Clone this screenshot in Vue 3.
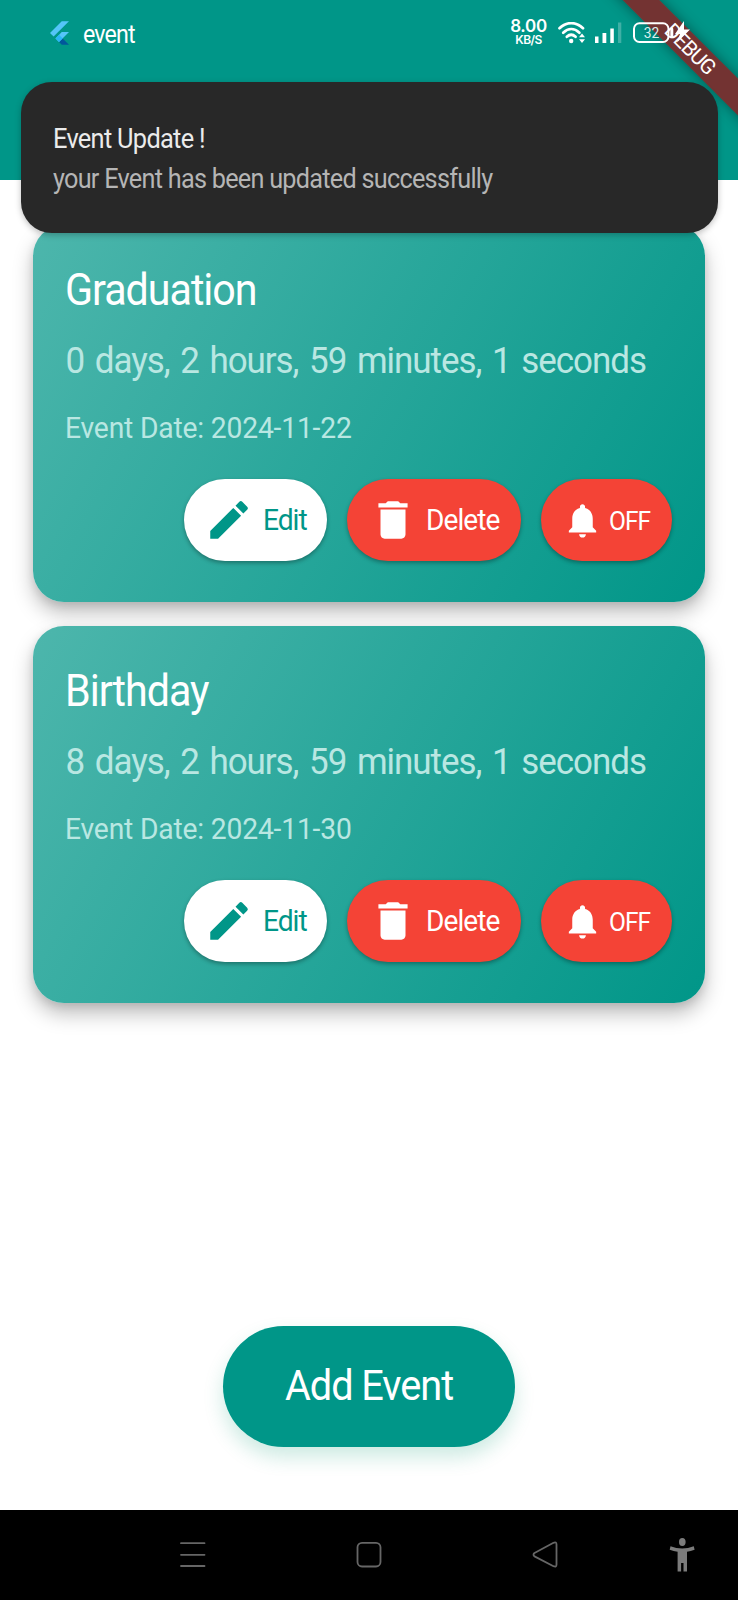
<script setup>
const events = [
  { name: 'Graduation', left: '0 days, 2 hours, 59 minutes, 1 seconds', date: '2024-11-22' },
  { name: 'Birthday', left: '8 days, 2 hours, 59 minutes, 1 seconds', date: '2024-11-30' },
]
</script>

<template>
  <div class="screen">
    <header class="header">
      <div class="status">
        <svg class="logo" viewBox="2.3 0 19.4 24">
          <path fill="#54c5f8" d="M14.314 0L2.3 12 6 15.7 21.684.013z" />
          <path fill="#54c5f8" d="M14.328 11.072L7.857 17.53l3.69 3.69L21.7 11.072z" />
          <path fill="#01579b" d="M11.547 21.22L14.327 24H21.7l-6.46-6.468z" />
          <path fill="#29b6f6" d="M7.857 17.53l3.69-3.69 3.693 3.692-3.693 3.688z" />
        </svg>
        <span class="app-name">event</span>
        <div class="speed"><b>8.00</b><small>KB/S</small></div>
        <svg class="wifi" viewBox="0 0 28 22">
          <g fill="none" stroke="#fff" stroke-width="2.7" stroke-linecap="round">
            <path d="M1.5 6.3C8.5-.6 18-.6 25 6.3" />
            <path d="M5.2 10.7c5-4.8 11.2-4.8 16.2 0" />
            <path d="M8.8 14.8c2.8-2.6 6-2.6 8.8 0" />
          </g>
          <circle cx="13.2" cy="19" r="2.2" fill="#fff" />
          <path fill="#fff" d="M21 15.3l3-3.8 3 3.8zM21 17.3h6l-3 3.8z" />
        </svg>
        <svg class="signal" viewBox="0 0 28 22">
          <g fill="#fff">
            <rect x="0" y="14.5" width="3.5" height="6.5" />
            <rect x="7.5" y="11" width="3.8" height="10" />
            <rect x="15.3" y="6.5" width="3.5" height="14.5" />
            <rect x="23" y="0.5" width="3.3" height="20.5" opacity=".25" />
          </g>
        </svg>
        <svg class="battery" viewBox="0 0 58 24">
          <rect x="1" y="2.3" width="34.5" height="18.7" rx="5.5" fill="none" stroke="#fff" stroke-width="2" />
          <text x="10.8" y="17" textLength="15.5" lengthAdjust="spacingAndGlyphs">32</text>
          <path d="M38.8 8v7.5" stroke="#fff" stroke-width="3" stroke-linecap="round" />
          <path fill="#fff" d="M51 0l-9 13h5l-3 8.500 13-13h-6z" />
        </svg>
      </div>
    </header>

    <main class="list">
      <article v-for="e in events" :key="e.name" class="card">
        <h2 class="title"><span>{{ e.name }}</span></h2>
        <p class="countdown"><span>{{ e.left }}</span></p>
        <p class="date"><span>Event Date: {{ e.date }}</span></p>
        <div class="actions">
          <button class="btn edit">
            <svg viewBox="0 0 24 24"><path d="M3 17.25V21h3.75L17.81 9.94l-3.75-3.75zM20.71 7.04a.996.996 0 0 0 0-1.41l-2.34-2.34a.996.996 0 0 0-1.41 0l-1.83 1.83 3.75 3.75z" /></svg>
            <span>Edit</span>
          </button>
          <button class="btn delete">
            <svg viewBox="0 0 24 24"><path d="M6 19c0 1.1.9 2 2 2h8c1.1 0 2-.9 2-2V7H6zM19 4h-3.5l-1-1h-5l-1 1H5v2h14z" /></svg>
            <span>Delete</span>
          </button>
          <button class="btn off">
            <svg viewBox="0 0 24 24"><path d="M12 22c1.1 0 2-.9 2-2h-4c0 1.1.89 2 2 2zM18 16v-5c0-3.07-1.64-5.64-4.5-6.32V4c0-.83-.67-1.5-1.5-1.5s-1.5.67-1.5 1.5v.68C7.63 5.36 6 7.92 6 11v5l-2 2v1h16v-1z" /></svg>
            <span>OFF</span>
          </button>
        </div>
      </article>
    </main>

    <button class="add"><span>Add Event</span></button>

    <nav class="nav">
      <svg viewBox="0 0 738 90">
        <g fill="none" stroke="#666" stroke-width="1.8" stroke-linecap="round" stroke-linejoin="round">
          <path d="M181 33.2h23.500M181 44.800h23.500M181 56h23.500" />
          <rect x="357.5" y="32.8" width="23" height="23.7" rx="4.5" />
          <path d="M534.5 43L553.5 32.8q3-1.3 3 1.7V54.5q0 3-3 1.7L534.5 46.4q-2-1.8 0-3.4z" />
        </g>
        <g fill="#7b7b7b">
          <ellipse cx="682.3" cy="32" rx="3.3" ry="3.9" />
          <path d="M670.5 36.2q11.700 4.400 23.300 0l.8 3.500q-4 1.600-7.600 2V61.500h-3.500V53h-2.400v8.500h-3.500V41.700q-4-.5-7.900-2z" />
        </g>
      </svg>
    </nav>

    <div class="debug-clip"><div class="debug"><span>DEBUG</span></div></div>

    <section class="toast">
      <p class="toast-title"><span>Event Update !</span></p>
      <p class="toast-body"><span>your Event has been updated successfully</span></p>
    </section>
  </div>
</template>

<style>
body { margin: 0; background: #fff; }
</style>

<style scoped>
.screen {
  position: relative;
  display: flex;
  flex-direction: column;
  width: 738px;
  height: 1600px;
  overflow: hidden;
  background: #fff;
  font-family: Roboto, "Liberation Sans", sans-serif;
}
p, h2 { margin: 0; font-weight: 400; white-space: nowrap; }
p span, h2 span, .btn span, .add span, .app-name { display: inline-block; transform-origin: 0 50%; white-space: nowrap; }
svg { display: block; flex: none; }

.header { flex: none; height: 180px; background: #009688; }
.status { position: relative; z-index: 2; display: flex; align-items: center; height: 66px; padding-left: 50px; color: #fff; }
.logo { width: 19px; height: 24px; }
.app-name { width: 51px; margin-left: 14px; margin-top: 2px; font-size: 25px; letter-spacing: -0.9px; transform: scaleX(.93); }
.speed { display: flex; flex-direction: column; align-items: center; width: 37px; margin-left: 376px; margin-top: -2px; }
.speed b { font: 600 17px/15px Inter, sans-serif; letter-spacing: -.3px; }
.speed small { font: 600 12px/12px Inter, sans-serif; letter-spacing: -.6px; }
.wifi { width: 28px; height: 22px; margin-left: 11px; }
.signal { width: 28px; height: 22px; margin-left: 9px; }
.battery { width: 58px; height: 24px; margin-left: 10px; }
.battery text { font: 400 15px Roboto, sans-serif; fill: #d9f0ee; }

.list { display: flex; flex-direction: column; flex: none; gap: 24px; padding: 45px 33px 0; }
.card {
  box-sizing: border-box;
  height: 377px;
  padding: 39px 33px 0 32px;
  border-radius: 31px;
  background: linear-gradient(119.3deg, #4db6ac, #009688);
  box-shadow: 0 11px 20px rgba(0, 0, 0, .25), 0 3px 8px rgba(0, 0, 0, .1);
}
.title { height: 52px; font-size: 44px; line-height: 52px; color: #fff; }
.title span { letter-spacing: -1.1px; transform: scaleX(.937); }
.countdown { height: 44px; margin-top: 22px; font-size: 37px; line-height: 44px; color: #b9e7e2; }
.countdown span { letter-spacing: -1.1px; word-spacing: 3.2px; transform: translate(.5px, .5px) scaleX(.945); }
.date { height: 34px; margin-top: 29px; font-size: 29px; line-height: 34px; color: #b9e7e2; }
.date span { letter-spacing: -.2px; transform: scaleX(.975); }
.actions { display: flex; justify-content: flex-end; gap: 20px; margin-top: 34px; }
.btn {
  display: flex;
  align-items: center;
  box-sizing: border-box;
  height: 82px;
  padding: 0;
  border: 0;
  border-radius: 41px;
  color: #fff;
  background: #f44336;
  font: 400 30px Roboto, sans-serif;
  box-shadow: 0 2px 4px rgba(0, 0, 0, .32);
}
.btn svg { width: 50px; height: 50px; fill: currentColor; }
.edit { width: 143px; padding-left: 20px; color: #009688; background: #fff; }
.edit span { margin-left: 9px; margin-top: -1px; letter-spacing: -1.1px; transform: scaleX(.94); }
.delete { width: 174px; padding-left: 20.5px; }
.delete span { margin-left: 8.5px; margin-top: -1px; letter-spacing: -1px; transform: scaleX(.935); }
.off { width: 131px; padding-left: 21px; font-size: 25px; }
.off svg { width: 41px; height: 41px; }
.off span { margin-left: 6px; margin-top: 2px; letter-spacing: -1px; transform: scaleX(.98); }

.add {
  flex: none;
  align-self: center;
  box-sizing: border-box;
  width: 292px;
  height: 121px;
  margin-top: 322.5px;
  padding: 0 0 2px 62px;
  border: 0;
  border-radius: 61px;
  text-align: left;
  color: #fff;
  background: #009688;
  font: 400 42px Roboto, sans-serif;
  box-shadow: 0 10px 20px rgba(0, 150, 110, .2);
}
.add span { letter-spacing: -1.1px; transform: scaleX(.945); }

.nav { height: 90px; margin-top: auto; background: #000; }
.nav svg { width: 738px; height: 90px; }

.debug-clip { position: absolute; top: 0; right: 0; width: 160px; height: 160px; overflow: hidden; }
.debug {
  position: absolute;
  left: 11.5px;
  top: 36px;
  display: flex;
  align-items: center;
  justify-content: center;
  width: 200px;
  height: 26px;
  transform: rotate(45deg);
  color: #fff;
  background: rgba(160, 12, 16, .72);
  box-shadow: 0 0 14px rgba(0, 0, 0, .4);
  font-size: 21px;
}
.debug span { letter-spacing: -1px; }

.toast {
  position: absolute;
  left: 20.5px;
  top: 82px;
  z-index: 3;
  box-sizing: border-box;
  width: 697px;
  height: 151px;
  padding: 36.5px 32px 0;
  border-radius: 31px;
  background: #282828;
  box-shadow: 0 2px 6px rgba(0, 0, 0, .25);
  font-size: 27px;
  line-height: 40px;
}
.toast-title { height: 40px; color: #ebebeb; }
.toast-title span { letter-spacing: -.75px; transform: scaleX(.94); }
.toast-body { height: 40px; color: #b5b5b5; }
.toast-body span { letter-spacing: -.8px; transform: scaleX(.936); }
</style>
